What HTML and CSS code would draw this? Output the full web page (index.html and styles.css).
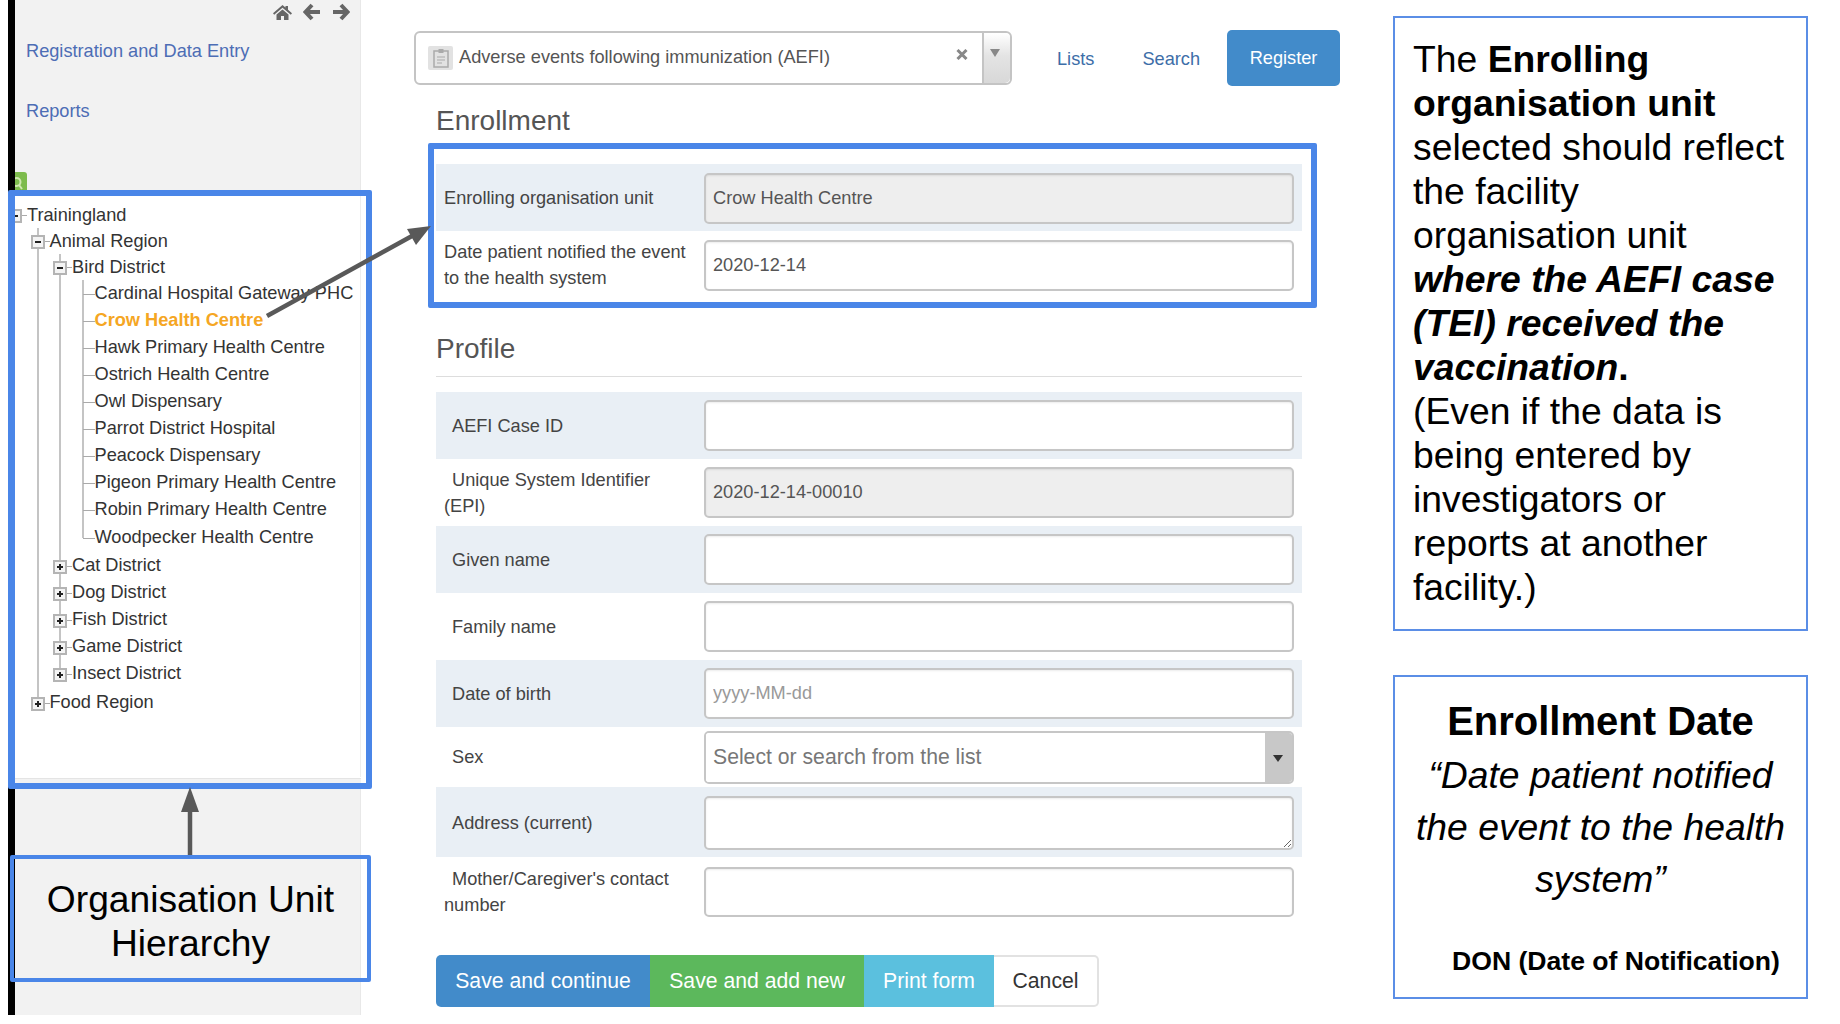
FILE: index.html
```html
<!DOCTYPE html>
<html lang="en">

<head>
    <meta charset="UTF-8">
    <title>AEFI Enrollment</title>
    <link rel="stylesheet" href="styles.css">
</head>

<body>
    <div class="slide">
        <!-- Left menu with org unit tree -->
        <aside class="sidebar">
            <div class="menu-icons">
                <svg class="menu-icon" width="19" height="15" viewBox="0 0 19 15">
                    <path d="M9.5 0 12.5 2.6V1H15V4.8L19 8.3 17.8 9.7 9.5 2.7 1.2 9.7 0 8.3Z" />
                    <path d="M3.5 9.6 9.5 4.6 15.5 9.6V15H11V11H8V15H3.5Z" />
                </svg>
                <svg class="menu-icon" width="18" height="18" viewBox="0 0 18 18">
                    <path d="M9 2 2.5 9 9 16M3 9H17" fill="none" stroke="#666" stroke-width="4" />
                </svg>
                <svg class="menu-icon" width="18" height="18" viewBox="0 0 18 18">
                    <path d="M9 2 15.5 9 9 16M15 9H1" fill="none" stroke="#666" stroke-width="4" />
                </svg>
            </div>
            <a class="menu-link first-link" href="#">Registration and Data Entry</a>
            <a class="menu-link" href="#">Reports</a>
            <div class="tree-search">
                <svg width="11" height="18" viewBox="0 0 11 18">
                    <circle cx="1.5" cy="10" r="4" fill="none" stroke="#cfe8b0" stroke-width="2" />
                    <path d="M4 13 7 17" stroke="#cfe8b0" stroke-width="2" />
                </svg>
            </div>

            <div class="tree-box">
                <div class="tree-panel">
                    <ul class="tree">
                        <li>
                            <div class="node node-top"><span class="toggle minus"></span>Trainingland</div>
                            <ul>
                                <li>
                                    <div class="node node-top"><span class="toggle minus"></span>Animal Region</div>
                                    <ul>
                                        <li>
                                            <div class="node node-top"><span class="toggle minus"></span>Bird District</div>
                                            <ul>
                                                <li><div class="node leaf">Cardinal Hospital Gateway PHC</div></li>
                                                <li><div class="node leaf selected">Crow Health Centre</div></li>
                                                <li><div class="node leaf">Hawk Primary Health Centre</div></li>
                                                <li><div class="node leaf">Ostrich Health Centre</div></li>
                                                <li><div class="node leaf">Owl Dispensary</div></li>
                                                <li><div class="node leaf">Parrot District Hospital</div></li>
                                                <li><div class="node leaf">Peacock Dispensary</div></li>
                                                <li><div class="node leaf">Pigeon Primary Health Centre</div></li>
                                                <li><div class="node leaf">Robin Primary Health Centre</div></li>
                                                <li class="spaced"><div class="node leaf">Woodpecker Health Centre</div></li>
                                            </ul>
                                        </li>
                                        <li class="spaced"><div class="node"><span class="toggle plus"></span>Cat District</div></li>
                                        <li><div class="node"><span class="toggle plus"></span>Dog District</div></li>
                                        <li><div class="node"><span class="toggle plus"></span>Fish District</div></li>
                                        <li><div class="node"><span class="toggle plus"></span>Game District</div></li>
                                        <li><div class="node"><span class="toggle plus"></span>Insect District</div></li>
                                    </ul>
                                </li>
                                <li class="region-gap"><div class="node"><span class="toggle plus"></span>Food Region</div></li>
                            </ul>
                        </li>
                    </ul>
                </div>
                <div class="tree-end"></div>
            </div>

            <div class="hierarchy-note">Organisation Unit<br>Hierarchy</div>
        </aside>

        <!-- Registration form -->
        <main class="main">
            <div class="top-bar">
                <div class="program-select">
                    <span class="program-icon">
                        <svg width="16" height="20" viewBox="0 0 16 20">
                            <rect x="1" y="3" width="14" height="16" fill="none" stroke="#aaa" stroke-width="1.5" />
                            <rect x="5.5" y="1" width="5" height="4" fill="#aaa" />
                            <path d="M4 9H12M4 12H12M4 15H9" stroke="#aaa" stroke-width="1.2" />
                        </svg>
                    </span>
                    <span class="program-name">Adverse events following immunization (AEFI)</span>
                    <span class="program-clear">
                        <svg width="12" height="11" viewBox="0 0 12 11">
                            <path d="M1.5 1 10.5 10M10.5 1 1.5 10" stroke="#888" stroke-width="3" />
                        </svg>
                    </span>
                    <span class="program-arrow"></span>
                </div>
                <a class="nav-link lists-link" href="#">Lists</a>
                <a class="nav-link search-link" href="#">Search</a>
                <a class="register-btn" href="#">Register</a>
            </div>

            <h3 class="section-title">Enrollment</h3>
            <div class="enrollment-box">
                <div class="form-row shaded">
                    <label class="form-label">Enrolling organisation unit</label>
                    <input class="form-input" type="text" value="Crow Health Centre" disabled>
                </div>
                <div class="form-row">
                    <label class="form-label">Date patient notified the event to the health system</label>
                    <input class="form-input" type="text" value="2020-12-14">
                </div>
            </div>

            <div class="profile">
                <h3 class="section-title profile-title">Profile</h3>
                <div class="form-row shaded">
                    <label class="form-label indented">AEFI Case ID</label>
                    <input class="form-input" type="text">
                </div>
                <div class="form-row">
                    <label class="form-label indented">Unique System Identifier (EPI)</label>
                    <input class="form-input" type="text" value="2020-12-14-00010" disabled>
                </div>
                <div class="form-row shaded">
                    <label class="form-label indented">Given name</label>
                    <input class="form-input" type="text">
                </div>
                <div class="form-row">
                    <label class="form-label indented">Family name</label>
                    <input class="form-input" type="text">
                </div>
                <div class="form-row shaded">
                    <label class="form-label indented">Date of birth</label>
                    <input class="form-input" type="text" placeholder="yyyy-MM-dd">
                </div>
                <div class="form-row sex-row">
                    <label class="form-label indented">Sex</label>
                    <div class="combo">
                        <input class="combo-input" type="text" placeholder="Select or search from the list">
                        <span class="combo-btn"></span>
                    </div>
                </div>
                <div class="form-row shaded address-row">
                    <label class="form-label indented">Address (current)</label>
                    <textarea class="form-input form-area"></textarea>
                </div>
                <div class="form-row contact-row">
                    <label class="form-label indented">Mother/Caregiver's contact number</label>
                    <input class="form-input contact-input" type="text">
                </div>
            </div>

            <div class="btn-group">
                <button class="btn btn-save">Save and continue</button>
                <button class="btn btn-add">Save and add new</button>
                <button class="btn btn-print">Print form</button>
                <button class="btn btn-cancel">Cancel</button>
            </div>
        </main>

        <!-- Callouts on the right -->
        <div class="notes">
            <div class="note note-unit">
                The <b>Enrolling organisation unit</b> selected should reflect the facility organisation unit
                <b><i>where the AEFI case (TEI) received the vaccination</i>.</b><br>
                (Even if the data is being entered by investigators or reports at another facility.)
            </div>
            <div class="note note-date">
                <div class="date-title">Enrollment Date</div>
                <div class="date-quote">&ldquo;Date patient notified the event to the health system&rdquo;</div>
                <div class="date-don">DON (Date of Notification)</div>
            </div>
        </div>

        <!-- Annotation arrows drawn over the page -->
        <svg class="arrows" width="1840" height="1024" viewBox="0 0 1840 1024">
            <path d="M267 316 412 236" stroke="#595959" stroke-width="4.5" />
            <path d="M431 226 407 229 416 245Z" fill="#595959" />
            <path d="M190 855V810" stroke="#595959" stroke-width="4.5" />
            <path d="M190 787 199 812H181Z" fill="#595959" />
        </svg>
    </div>
</body>

</html>
```

FILE: styles.css
```css
* {
    box-sizing: border-box;
}

body {
    margin: 0;
    background: white;
    font-family: "Liberation Sans", Arial, sans-serif;
    font-size: 18.2px;
    color: #444;
}

.slide {
    position: relative;
    display: flex;
    width: 1840px;
    height: 1024px;
    padding-left: 8px;
    overflow: hidden;
}

/* Sidebar */
.sidebar {
    display: flex;
    flex-direction: column;
    flex: none;
    width: 353px;
    height: 1015px;
    background-color: #f2f2f2;
    border-left: 7px solid black;
    border-right: 1px solid #e8e8e8;
}

.menu-icons {
    display: flex;
    align-items: center;
    justify-content: flex-end;
    gap: 11px;
    height: 24px;
    padding: 0 10px 0 0;
}

.menu-icon {
    fill: #666;
}

.menu-link {
    display: block;
    margin-left: 11px;
    line-height: 26px;
    color: #4d6db5;
    text-decoration: none;
}

.first-link {
    margin-top: 14px;
    margin-bottom: 34px;
}

.tree-search {
    width: 12px;
    height: 18px;
    margin-top: 48px;
    background-color: #7dbb4d;
    border-radius: 0 3px 0 0;
}

.tree-box {
    display: flex;
    flex-direction: column;
    justify-content: space-between;
    flex: none;
    width: 364px;
    height: 599px;
    margin-left: -7px;
    background-color: white;
    border: 7px solid #4a86e8;
    border-width: 6px 6px 6px 7px;
    border-radius: 2px;
}

.tree-panel {
    width: 346px;
    height: 581px;
    overflow: hidden;
    border-right: 1px solid #eee;
}

.tree-end {
    width: 346px;
    height: 5px;
    background-color: #f2f2f2;
    border-top: 1px solid #e4e4e4;
}

.tree,
.tree ul {
    margin: 0;
    padding: 0;
    list-style: none;
}

.tree {
    margin-left: 12px;
    padding-top: 6px;
    color: #333;
}

.tree ul {
    position: relative;
    margin-left: 22.5px;
}

.tree ul::before {
    content: "";
    position: absolute;
    top: 0;
    bottom: 13px;
    left: -13px;
    width: 2px;
    background-color: #c4c4c4;
}

.node {
    position: relative;
    height: 27px;
    line-height: 27px;
    white-space: nowrap;
}

.node-top {
    height: 26px;
    line-height: 26px;
}

.node::before {
    content: "";
    position: absolute;
    top: 50%;
    left: -6px;
    width: 6px;
    height: 1px;
    background-color: #aaa;
}

.leaf::before {
    left: -12px;
    width: 12px;
}

.toggle {
    position: absolute;
    top: 50%;
    left: -19px;
    z-index: 1;
    width: 14px;
    height: 14px;
    margin-top: -6px;
    background-color: #f4f4f4;
    border: 2px solid #b4b4b4;
}

/* the sign inside a toggle box */
.toggle::before,
.plus::after {
    content: "";
    position: absolute;
    background-color: #222;
}

.toggle::before {
    top: 4px;
    left: 2px;
    width: 6px;
    height: 2px;
}

.plus::after {
    top: 2px;
    left: 4px;
    width: 2px;
    height: 6px;
}

.selected {
    font-weight: bold;
    color: #f5a623;
}

.spaced {
    margin-top: 1px;
}

.region-gap {
    margin-top: 2px;
}

.hierarchy-note {
    flex: none;
    width: 361px;
    height: 127px;
    margin: 66px 0 0 -5px;
    padding-top: 18px;
    border: 4px solid #4a86e8;
    border-radius: 2px;
    font-size: 37.2px;
    line-height: 44px;
    text-align: center;
    color: black;
}

/* Main column */
.main {
    flex: none;
    width: 1032px;
    padding: 31px 0 0 53px;
}

.top-bar {
    display: flex;
    align-items: center;
    height: 54px;
}

.program-select {
    position: relative;
    display: flex;
    align-items: center;
    flex: none;
    width: 598px;
    height: 54px;
    padding-left: 12px;
    border: 2px solid #c4c4c4;
    border-radius: 6px;
}

.program-icon {
    display: flex;
    align-items: center;
    justify-content: center;
    width: 25px;
    height: 24px;
    background-color: #e2e2e2;
    border-radius: 2px;
}

.program-name {
    margin: 0 0 2px 6px;
    color: #555;
}

.program-clear {
    position: absolute;
    top: 16px;
    right: 42px;
    line-height: 0;
}

.program-arrow {
    position: absolute;
    top: 0;
    right: 0;
    bottom: 0;
    width: 28px;
    background: linear-gradient(#fff, #e4e4e4 45%, #d8d8d8);
    border-left: 2px solid #c4c4c4;
    border-radius: 0 5px 5px 0;
}

.program-arrow::after {
    content: "";
    position: absolute;
    top: 16px;
    left: 6px;
    border-top: 8px solid #888;
    border-right: 5px solid transparent;
    border-left: 5px solid transparent;
}

.nav-link {
    padding-top: 2px;
    color: #3d6ea8;
    text-decoration: none;
}

.lists-link {
    margin-left: 45px;
}

.search-link {
    margin-left: 48px;
}

.register-btn {
    width: 113px;
    height: 56px;
    margin-left: 27px;
    background-color: #428bca;
    border-radius: 5px;
    line-height: 56px;
    text-align: center;
    color: white;
    text-decoration: none;
}

.section-title {
    height: 34px;
    margin: 19px 0 0 22px;
    font-size: 28px;
    font-weight: normal;
    line-height: 34px;
    color: #555;
}

.enrollment-box {
    width: 889px;
    height: 165px;
    margin: 5px 0 0 14px;
    padding: 15px 9px 0 2px;
    border: 6px solid #4a86e8;
    border-radius: 2px;
}

.enrollment-box .form-input {
    margin-top: 2px;
}

.form-row {
    display: flex;
    align-items: center;
    height: 67px;
    padding-right: 8px;
    line-height: 26px;
}

.shaded {
    background-color: #e9eff5;
}

.form-label {
    flex: none;
    width: 268px;
    padding-left: 8px;
    padding-right: 7px;
}

.form-label.indented {
    padding-right: 15px;
    text-indent: 8px;
}

.form-input {
    flex: 1;
    display: block;
    height: 51px;
    min-width: 0;
    padding: 0 7px;
    background-color: white;
    border: 2px solid #c6c6c6;
    border-radius: 5px;
    box-shadow: inset 0 1px 2px rgba(0, 0, 0, 0.08);
    font-family: inherit;
    font-size: 18.2px;
    color: #555;
}

.form-input:disabled {
    background-color: #eee;
    opacity: 1;
    color: #555;
}

.form-input::placeholder {
    color: #999;
}

.profile {
    width: 866px;
    margin: 24px 0 0 22px;
}

.profile-title {
    height: 45px;
    margin: 0 0 15px;
    border-bottom: 1px solid #ddd;
}

.sex-row {
    height: 60px;
}

.combo {
    flex: 1;
    display: flex;
    height: 53px;
    border: 2px solid #c6c6c6;
    border-radius: 5px;
    overflow: hidden;
}

.combo-input {
    flex: 1;
    min-width: 0;
    padding: 0 7px;
    border: 0;
    font-family: inherit;
    font-size: 21.2px;
}

.combo-input::placeholder {
    color: #777;
}

.combo-btn {
    position: relative;
    flex: none;
    width: 27px;
    background-color: #c8c8c8;
}

.combo-btn::after {
    content: "";
    position: absolute;
    top: 22px;
    left: 8px;
    border-top: 7px solid #333;
    border-right: 5px solid transparent;
    border-left: 5px solid transparent;
}

.address-row {
    height: 70px;
    padding-top: 2px;
}

.form-area {
    height: 54px;
    resize: vertical;
}

.contact-row {
    height: 68px;
    padding-top: 2px;
}

.contact-input {
    height: 50px;
}

.btn-group {
    display: flex;
    margin: 30px 0 0 22px;
}

.btn {
    height: 52px;
    padding: 0;
    border: 0;
    font-family: inherit;
    font-size: 21.2px;
    color: white;
}

.btn-save {
    width: 214px;
    background-color: #428bca;
    border-radius: 5px 0 0 5px;
}

.btn-add {
    width: 214px;
    background-color: #5cb85c;
}

.btn-print {
    width: 130px;
    background-color: #5bc0de;
}

.btn-cancel {
    width: 105px;
    background-color: white;
    border: 2px solid #e2e2e2;
    border-left: 0;
    border-radius: 0 5px 5px 0;
    color: #333;
}

/* Right hand notes */
.notes {
    flex: none;
    width: 415px;
    padding-top: 16px;
    color: black;
}

.note {
    border: 2px solid #5b8ee6;
}

.note-unit {
    height: 615px;
    padding: 19px 18px 0 18px;
    font-size: 37.3px;
    line-height: 44px;
}

.note-date {
    height: 324px;
    margin-top: 44px;
    padding-top: 21px;
}

.date-title {
    font-size: 40px;
    font-weight: bold;
    line-height: 46px;
    text-align: center;
}

.date-quote {
    margin-top: 5px;
    padding: 0 10px;
    font-size: 37.3px;
    font-style: italic;
    line-height: 52px;
    text-align: center;
}

.date-don {
    margin-top: 40px;
    padding-left: 57px;
    font-size: 26.6px;
    font-weight: bold;
    line-height: 32px;
}

.arrows {
    position: absolute;
    top: 0;
    left: 0;
    pointer-events: none;
}
```
